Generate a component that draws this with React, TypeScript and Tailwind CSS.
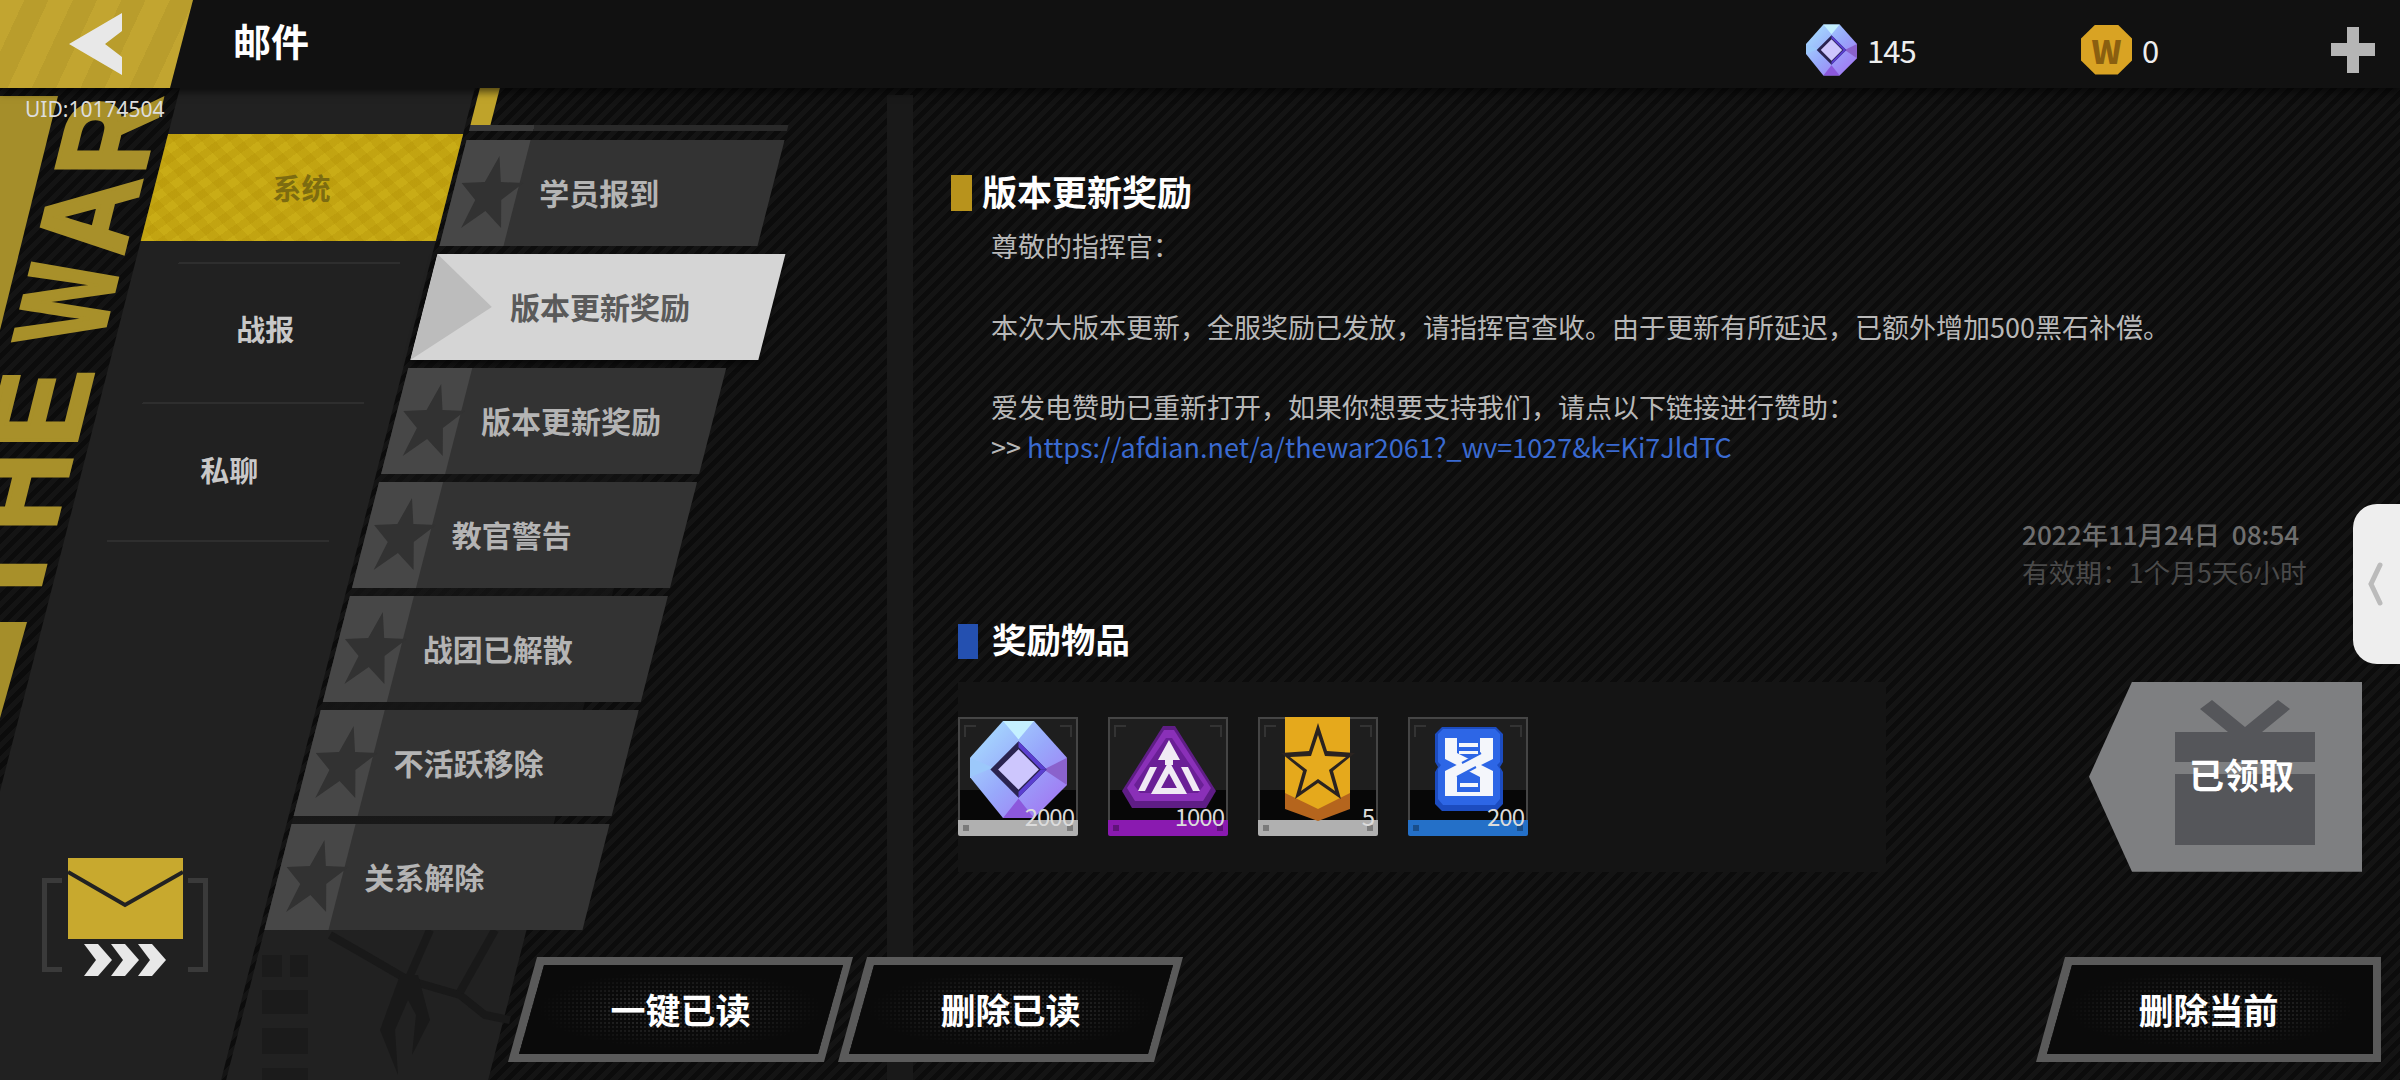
import { ReactNode } from 'react'

const subItems = ['学员报到', '版本更新奖励', '版本更新奖励', '教官警告', '战团已解散', '不活跃移除', '关系解除']

const warLetters = [
  { ch: 'T', bottom: 614 },
  { ch: 'H', bottom: 531 },
  { ch: 'E', bottom: 448 },
  { ch: 'W', bottom: 341 },
  { ch: 'A', bottom: 256 },
  { ch: 'R', bottom: 175 },
]

function Gem({ className }: { className: string }) {
  return (
    <svg viewBox="0 0 100 100" className={className}>
      <defs>
        <linearGradient id="gemFill" x1="0" y1="0" x2="1" y2="1">
          <stop offset="0" stopColor="#a9e6ff" />
          <stop offset="0.5" stopColor="#98a8fb" />
          <stop offset="1" stopColor="#a46cf0" />
        </linearGradient>
      </defs>
      <polygon points="34,0 66,0 100,38 100,66 66,100 34,100 0,58 0,38" fill="url(#gemFill)" />
      <polygon points="34,0 66,0 50,19" fill="#c4f0ff" />
      <polygon points="100,38 100,66 76,50" fill="#8a62cc" />
      <polygon points="34,100 66,100 50,80" fill="#8c58dc" />
      <polygon points="0,38 0,58 24,48" fill="#9cc8fb" />
      <polygon points="50,21 79,50 50,79 21,50" fill="#2a2350" />
      <polygon points="50,21 79,50 73,50 50,27" fill="#5a3fd0" />
      <polygon points="50,79 79,50 73,50 50,73" fill="#5a3fd0" />
      <polygon points="50,29 71,50 50,71 29,50" fill="#cdc6fd" />
    </svg>
  )
}

function Slot({ bar, qty, children }: { bar: string; qty: string; children: ReactNode }) {
  return (
    <div className="relative flex h-[119px] w-[120px] flex-col">
      <div className="flex-1 border-x-2 border-t-2 border-[#454545] bg-[linear-gradient(180deg,#1e1e1e_0,#1e1e1e_70%,#070707_70%)]" />
      <div className={`flex h-[16px] items-center justify-between rounded-b-[2px] px-[5px] ${bar}`}>
        <span className="size-[6px] bg-black/30" />
        <span className="size-[6px] bg-black/30" />
      </div>
      <span className="absolute left-[6px] top-[8px] size-[12px] border-l-2 border-t-2 border-[#333]" />
      <span className="absolute right-[6px] top-[8px] size-[12px] border-r-2 border-t-2 border-[#333]" />
      <svg viewBox="0 0 120 104" className="absolute left-0 top-0 h-[104px] w-[120px]">
        {children}
      </svg>
      <span className="absolute bottom-[4px] right-[4px] text-[24px] leading-[32px] tracking-[-1px] text-[#dcdcdc]">{qty}</span>
    </div>
  )
}

function CutButton({ label, flat, className }: { label: string; flat?: boolean; className?: string }) {
  return (
    <div
      className={`relative flex h-[105px] w-[345px] items-center justify-center bg-[#5a5a5a] pb-[3px] ${
        flat ? '[clip-path:polygon(29px_0,100%_0,100%_100%,0_100%)]' : '[clip-path:polygon(29px_0,100%_0,calc(100%-29px)_100%,0_100%)]'
      } ${className ?? ''}`}
    >
      <div
        className={`absolute left-[11px] top-[8px] h-[89px] bg-[radial-gradient(ellipse_at_center,transparent_0,#0a0a0a_62%),radial-gradient(#3a3a3a_1px,#0a0a0a_1px)] bg-[size:100%_100%,4px_4px] ${
          flat
            ? 'w-[326px] [clip-path:polygon(25px_0,100%_0,100%_100%,0_100%)]'
            : 'w-[324px] [clip-path:polygon(25px_0,100%_0,calc(100%-25px)_100%,0_100%)]'
        }`}
      />
      <span className="relative text-[35px] font-bold leading-none text-white">{label}</span>
    </div>
  )
}

export default function App() {
  return (
    <div className="relative flex h-[1080px] w-[2400px] flex-col overflow-hidden bg-[repeating-linear-gradient(135deg,#0c0c0c_0,#0c0c0c_5px,#141414_5px,#141414_10px)] font-['Noto_Sans_CJK_SC','Noto_Sans',sans-serif]">
      {/* THE WAR decoration on the left edge */}
      <svg className="absolute left-0 top-0 h-[800px] w-[260px]" viewBox="0 0 260 800">
        <polygon points="0,96 58,96 0,330" fill="#a58e2a" />
        <polygon points="0,622 27,622 0,718" fill="#a58e2a" />
        {warLetters.map(l => {
          const x = 64 + (490 - l.bottom) * 0.25
          return (
            <text
              key={l.ch}
              transform={`matrix(0.25 -1 1 0 ${x} ${l.bottom})`}
              fontFamily="Liberation Sans"
              fontWeight="700"
              fontSize="128"
              textLength="78"
              lengthAdjust="spacingAndGlyphs"
              fill="#a8902a"
              stroke="#a8902a"
              strokeWidth="4"
            >
              {l.ch}
            </text>
          )
        })}
      </svg>

      {/* Header */}
      <div className="relative z-10 flex h-[88px] shrink-0 items-center bg-[#111111] shadow-[0_4px_8px_rgba(0,0,0,0.6)]">
        <div className="flex h-full w-[193px] items-center bg-[repeating-linear-gradient(115deg,#c2a530_0,#c2a530_22px,#b99d2c_22px,#b99d2c_44px)] pl-[69px] [clip-path:polygon(0_0,100%_0,calc(100%-23px)_100%,0_100%)]">
          <svg width="54" height="62" viewBox="0 0 54 62">
            <polygon points="53,0 0,31 53,62 53,44 36,31 53,18" fill="#e8e8e8" />
          </svg>
        </div>
        <div className="ml-[40px] mt-[-9px] text-[38px] font-bold leading-none text-white">邮件</div>
        <div className="ml-[1497px] mt-[11px] flex items-center">
          <Gem className="h-[52px] w-[51px]" />
          <span className="ml-[10px] w-[50px] text-[31px] leading-none tracking-[-1px] text-[#eeeeee]">145</span>
        </div>
        <div className="ml-[164px] mt-[11px] flex items-center">
          <div className="flex h-[50px] w-[51px] items-center justify-center bg-[#d9a323] text-[32px] font-black leading-none text-[#8a5f10] [clip-path:polygon(28%_0,72%_0,100%_28%,100%_72%,72%_100%,28%_100%,0_72%,0_28%)]">
            W
          </div>
          <span className="ml-[10px] text-[31px] leading-none text-[#eeeeee]">0</span>
        </div>
        <div className="relative ml-[172px] mt-[12px] h-[46px] w-[44px]">
          <span className="absolute left-[16px] top-0 h-full w-[12px] bg-[#b5b5b5]" />
          <span className="absolute left-0 top-[16px] h-[13px] w-full bg-[#b5b5b5]" />
        </div>
      </div>

      <div className="absolute left-[25px] top-[96px] z-10 text-[21px] leading-[26px] text-[#dddddd] font-['Noto_Sans',sans-serif]">UID:10174504</div>

      {/* Body */}
      <div className="flex min-h-0 flex-1">
        <div className="w-[887px] shrink-0">
          <div className="ml-[53px] flex h-[992px] -skew-x-[14.35deg] gap-[5px]">
            {/* Categories */}
            <div className="flex w-[295px] shrink-0 flex-col bg-[#212121] pt-[46px]">
              <div className="flex h-[107px] shrink-0 items-center justify-center bg-[#c9ac16] bg-[repeating-linear-gradient(40deg,transparent_0,transparent_9px,rgba(170,135,0,0.22)_9px,rgba(170,135,0,0.22)_18px),repeating-linear-gradient(-40deg,transparent_0,transparent_9px,rgba(170,135,0,0.22)_9px,rgba(170,135,0,0.22)_18px)]">
                <span className="skew-x-[14.35deg] text-[29px] font-bold leading-none text-[#7d6c10]">系统</span>
              </div>
              <div className="mt-[21px] flex h-[140px] shrink-0 items-center justify-center border-t-2 border-[#2e2e2e] pb-[10px] [border-image:linear-gradient(90deg,transparent_44px,#2e2e2e_44px,#2e2e2e_264px,transparent_264px)_1]">
                <span className="skew-x-[14.35deg] text-[29px] font-bold leading-none text-[#c8c8c8]">战报</span>
              </div>
              <div className="flex h-[140px] shrink-0 items-center justify-center border-y-2 border-[#2e2e2e] pb-[6px] [border-image:linear-gradient(90deg,transparent_44px,#2e2e2e_44px,#2e2e2e_264px,transparent_264px)_1]">
                <span className="skew-x-[14.35deg] text-[29px] font-bold leading-none text-[#c8c8c8]">私聊</span>
              </div>
            </div>

            {/* Mail list */}
            <div className="flex w-[262px] shrink-0 flex-col items-start bg-[linear-gradient(0deg,#212121_0,#212121_15%,#161616_30%,transparent_90%)]">
              <div className="h-[37px] w-[20px] shrink-0 bg-[#bfa32a]" />
              <div className="h-[6px] w-[318px] shrink-0 bg-[linear-gradient(90deg,#3a3a3a_64px,#292929_64px)]" />
              <div className="mt-[9px] flex flex-col items-start gap-[8px]">
                {subItems.map((label, i) =>
                  i === 1 ? (
                    <div key={i} className="relative flex h-[106px] w-[348px] items-center bg-[#d5d5d5] pb-[2px] pl-[86px] shadow-[0_4px_6px_rgba(0,0,0,0.5)]">
                      <span className="absolute left-0 top-0 h-full w-[68px] bg-[#bcbcbc] [clip-path:polygon(0_0,100%_50%,0_100%)]" />
                      <span className="relative skew-x-[14.35deg] text-[30px] font-bold leading-none text-[#5a5a5a]">{label}</span>
                    </div>
                  ) : (
                    <div key={i} className="relative flex h-[106px] w-[318px] items-center bg-[#333333] pb-[2px] pl-[86px]">
                      <span className="absolute left-0 top-0 h-full w-[64px] bg-[#474747]" />
                      <svg viewBox="0 0 62 72" className="absolute left-[6px] top-[16px] h-[72px] w-[62px]">
                        <polygon points="31,0 39,26 62,27 44,44 51,72 31,55 11,72 18,44 0,27 23,26" fill="#323232" />
                      </svg>
                      <span className="relative skew-x-[14.35deg] text-[30px] font-bold leading-none text-[#b4b4b4]">{label}</span>
                    </div>
                  ),
                )}
              </div>
            </div>
          </div>
        </div>

        <div className="mt-[7px] w-[26px] shrink-0 bg-[#191919]" />

        {/* Mail content */}
        <div className="flex min-w-0 flex-1 flex-col pl-[38px] pr-[38px] pt-[87px]">
          <div className="flex h-[36px] items-center">
            <span className="h-[36px] w-[21px] bg-[#b8931c]" />
            <span className="mb-[6px] ml-[10px] text-[35px] font-bold leading-none text-white">版本更新奖励</span>
          </div>
          <div className="ml-[40px] mt-[15px] whitespace-nowrap text-[27px] leading-[40.3px] text-[#b8b8b8]">
            <p>尊敬的指挥官：</p>
            <p className="mt-[40.3px]">本次大版本更新，全服奖励已发放，请指挥官查收。由于更新有所延迟，已额外增加500黑石补偿。</p>
            <p className="mt-[40.3px]">爱发电赞助已重新打开，如果你想要支持我们，请点以下链接进行赞助：</p>
            <p>
              &gt;&gt; <span className="text-[#3a6ad0]">https://afdian.net/a/thewar2061?_wv=1027&amp;k=Ki7JldTC</span>
            </p>
          </div>
          <div className="ml-[1071px] mt-[47px] whitespace-nowrap leading-[38px]">
            <p className="text-[26.2px] font-medium text-[#6e6e6e]">2022年11月24日&nbsp;&nbsp;08:54</p>
            <p className="text-[26.7px] text-[#4a4a4a]">有效期：1个月5天6小时</p>
          </div>
          <div className="ml-[7px] mt-[33px] flex h-[35px] items-center">
            <span className="h-[35px] w-[20px] bg-[#2450b0]" />
            <span className="mb-[6px] ml-[14px] text-[34.5px] font-bold leading-none text-white">奖励物品</span>
          </div>
          <div className="ml-[7px] mt-[23px] flex items-start">
            <div className="flex h-[190px] w-[928px] items-center gap-[30px] bg-[#141414]">
              <Slot bar="bg-[#b0b0b0]" qty="2000">
                <g transform="translate(12 4) scale(0.97)">
                  <Gem className="h-[100px] w-[100px]" />
                </g>
              </Slot>
              <Slot bar="bg-[#8a1ab0]" qty="1000">
                <polygon points="55,9 67,9 108,74 98,91 24,91 14,74" fill="#5f1d86" />
                <polygon points="56,13 66,13 103,71 95,84 27,84 19,71" fill="#8a30b8" />
                <polygon points="58,21 64,21 96,68 90,76 32,76 26,68" fill="#6a1f96" />
                <polygon points="61,23 72,43 65,43 65,48 57,48 57,43 50,43" fill="#f0eaf4" />
                <path d="M61 50 L74 74 L48 74 Z" fill="none" stroke="#f0eaf4" strokeWidth="6" />
                <polygon points="42,50 49,50 37,74 30,74" fill="#f0eaf4" />
                <polygon points="73,50 80,50 92,74 85,74" fill="#f0eaf4" />
              </Slot>
              <Slot bar="bg-[#b0b0b0]" qty="5">
                <polygon points="27,0 92,0 92,92 60,104 27,92" fill="#b5651d" />
                <polygon points="27,0 92,0 92,76 60,92 27,76" fill="#e5a91c" />
                <polygon points="60,6 69,34 97,36 75,54 83,82 60,66 37,82 45,54 23,36 51,34" fill="#2a2320" />
                <polygon points="60,18 67,39 88,40 71,53 77,74 60,62 43,74 49,53 32,40 53,39" fill="#e6ab1e" />
              </Slot>
              <Slot bar="bg-[#2470c8]" qty="200">
                <polygon points="34,10 88,10 95,17 95,45 92,50 95,55 95,87 88,94 34,94 27,87 27,55 30,50 27,45 27,17" fill="#1c4cc0" />
                <polygon points="35,12 87,12 92,17 92,45 89,48 92,52 92,82 87,88 35,88 30,82 30,52 33,48 30,45 30,17" fill="#2d66e6" />
                <polygon points="37,21 49,21 49,36 85,54 85,78 72,78 72,60 37,42" fill="#f4f6fb" />
                <polygon points="85,21 72,21 72,36 37,54 37,78 49,78 49,60 85,42" fill="#f4f6fb" />
                <path d="M49 60 L68 50 M73 36 L54 46" stroke="#2d66e6" strokeWidth="2" />
                <rect x="51" y="26" width="19" height="4" fill="#f4f6fb" />
                <rect x="51" y="34" width="19" height="3" fill="#f4f6fb" />
                <rect x="52" y="66" width="18" height="4" fill="#f4f6fb" />
                <rect x="37" y="75" width="48" height="4" fill="#f4f6fb" />
              </Slot>
            </div>
            <div className="relative ml-[203px] flex h-[190px] w-[273px] items-center justify-end bg-[#7e7f81] pb-[6px] pr-[68px] [clip-path:polygon(43px_0,100%_0,100%_100%,43px_100%,0_50%)]">
              <svg viewBox="0 0 273 190" className="absolute left-0 top-0 h-[190px] w-[273px]">
                <polygon points="111,27 123,18 156,45 189,18 201,27 173,50 139,50" fill="#55565a" />
                <rect x="86" y="50" width="140" height="30" fill="#55565a" />
                <rect x="86" y="92" width="140" height="71" fill="#55565a" />
              </svg>
              <span className="relative text-[35px] font-bold leading-none text-white">已领取</span>
            </div>
          </div>
        </div>
      </div>

      {/* Mail icon */}
      <div className="absolute left-[42px] top-[858px] h-[118px] w-[166px]">
        <span className="absolute left-0 top-[20px] h-[94px] w-[20px] border-y-[5px] border-l-[5px] border-[#3a3a3a]" />
        <span className="absolute right-0 top-[20px] h-[94px] w-[20px] border-y-[5px] border-r-[5px] border-[#3a3a3a]" />
        <svg viewBox="0 0 115 81" className="absolute left-[26px] top-0 h-[81px] w-[115px]">
          <rect width="115" height="81" fill="#c8a92e" />
          <path d="M0 14 L57 47 L115 14" fill="none" stroke="#222222" strokeWidth="4" />
        </svg>
        <svg viewBox="0 0 82 32" className="absolute left-[42px] top-[86px] h-[32px] w-[82px]">
          <polygon points="0,0 14,0 28,16 14,32 0,32 12,16" fill="#e8e8e8" />
          <polygon points="27,0 41,0 55,16 41,32 27,32 39,16" fill="#e8e8e8" />
          <polygon points="54,0 68,0 82,16 68,32 54,32 66,16" fill="#e8e8e8" />
        </svg>
      </div>

      {/* Cracked emblem under the list */}
      <svg viewBox="0 0 300 150" className="absolute left-[240px] top-[930px] h-[150px] w-[300px]">
        <g fill="none" stroke="#191919" strokeWidth="8">
          <path d="M168 50 L125 25 L90 5" />
          <path d="M168 50 L190 0" />
          <path d="M168 50 L220 65 L245 85 L270 90" />
          <path d="M220 62 L255 0" />
        </g>
        <polygon points="160,45 178,45 190,90 172,125 176,85 168,70 155,100 158,145 140,100" fill="#191919" />
        <g fill="#1b1b1b">
          <rect x="22" y="25" width="20" height="22" />
          <rect x="50" y="25" width="18" height="22" />
          <rect x="22" y="60" width="46" height="24" />
          <rect x="22" y="98" width="46" height="26" />
          <rect x="22" y="138" width="46" height="12" />
        </g>
      </svg>

      {/* Bottom action buttons */}
      <div className="absolute bottom-[18px] left-[508px] right-[19px] z-10 flex">
        <CutButton label="一键已读" />
        <CutButton label="删除已读" className="ml-[-15px]" />
        <CutButton label="删除当前" flat className="ml-auto" />
      </div>

      {/* Side tab */}
      <div className="absolute right-0 top-[504px] z-10 flex h-[160px] w-[47px] items-center rounded-l-[24px] bg-[#eeeeee] pl-[14px]">
        <svg width="16" height="44" viewBox="0 0 16 44">
          <path d="M13 3 L4 22 L13 41" fill="none" stroke="#bbbbbb" strokeWidth="5" strokeLinecap="round" />
        </svg>
      </div>
    </div>
  )
}
